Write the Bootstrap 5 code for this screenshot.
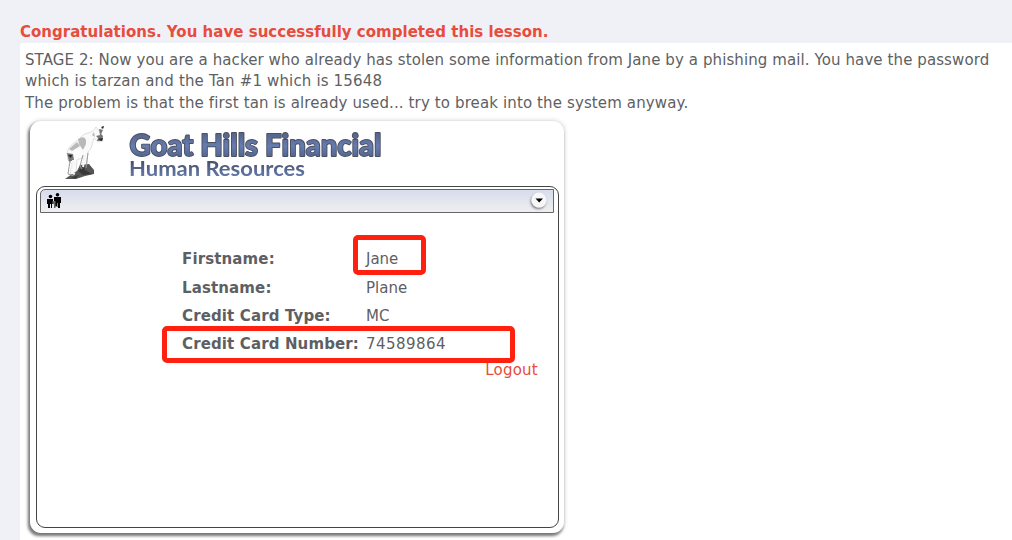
<!DOCTYPE html>
<html lang="en">
<head>
<meta charset="utf-8">
<meta name="viewport" content="width=device-width, initial-scale=1">
<title>Goat Hills Financial</title>
<link rel="stylesheet" href="https://cdn.jsdelivr.net/npm/bootstrap@5.3.0/dist/css/bootstrap.min.css">
<style>
body{background:#f0f1f7;color:#5e5f63;font-family:"DejaVu Sans",sans-serif;font-size:15px;line-height:21.43px;height:540px;overflow:hidden}
.feedback{color:#e74c3c;padding:22px 0 0;height:43px;letter-spacing:.02px}
.lesson{background:#fff;border-top-left-radius:3px;padding:7px 5px 0;height:497px}
.line-a{letter-spacing:.094px}
.line-b{letter-spacing:.155px}
.line-c{letter-spacing:.125px}
.panel{width:534px;height:412px;margin:7px 0 0 5px;border-radius:11px;background:#fff;box-shadow:-1.5px 2.5px 3px 0 #777,0 0 4px 1px #ddd;padding:0 5px 5px 6px}
.masthead{height:65px}
.window{height:342px;border:1px solid #444;border-radius:9px;padding:2px 4px 0 3px}
.toolbar{height:24px;border:1.5px solid #65666a;border-radius:5px 0 0 0;background:linear-gradient(#d7dcec,#efefef);padding:0 4px 0 5px}
.fields{margin:32px 0 0 142px;width:364px}
.field{height:28.4px;line-height:28.4px}
.label-cell{width:184px;letter-spacing:.13px}
.digits{letter-spacing:.46px}
.mark-box{position:absolute;border:5px solid #ff2010;border-radius:5px}
.mark-name{left:171px;top:-10px;width:73px;height:40px}
.mark-card{left:-20px;top:-4px;width:353px;height:37px}
.logout{color:#e74c3c;margin-right:8px;margin-top:1px;letter-spacing:.25px}
</style>
<script src="https://cdn.jsdelivr.net/npm/bootstrap@5.3.0/dist/js/bootstrap.bundle.min.js"></script>
</head>
<body>
<main class="ps-3 ms-1">
<div class="feedback fw-bold">Congratulations. You have successfully completed this lesson.</div>
<section class="lesson">
<div><span class="line-a">STAGE 2: Now you are a hacker who already has stolen some information from Jane by a phishing mail. You have the password</span><br><span class="line-b">which is tarzan and the Tan #1 which is 15648</span><br><span class="line-c">The problem is that the first tan is already used... try to break into the system anyway.</span></div>
<div class="panel">
<header class="masthead">
<svg class="d-block" width="360" height="65" viewBox="36 121 360 65">
<defs>
<linearGradient id="steel" x1="0" y1="0" x2="0" y2="1"><stop offset="0" stop-color="#4b5979"/><stop offset=".55" stop-color="#667cb0"/><stop offset="1" stop-color="#4a5b83"/></linearGradient>
<linearGradient id="slate" x1="0" y1="0" x2="0" y2="1"><stop offset=".2" stop-color="#444d63"/><stop offset="1" stop-color="#6c83bd"/></linearGradient>
<filter id="soft"><feGaussianBlur stdDeviation=".55"/></filter>
<filter id="edge"><feGaussianBlur stdDeviation=".3"/></filter>
</defs>
<g filter="url(#soft)">
<path d="M67 153C68 145 77 142 81 137C85 132 90 134 94 130L96 127L99 131L104 126L101 132L103 141L98 142L94 138C92 143 92 149 88 152L86 171L82 172L84 157L77 160L76 173L70 175L72 164L68 160Z" fill="#fafafa" stroke="#d5d5d5" stroke-width=".8"/>
<path d="M78 139Q87 134 86 144L83 150L79 144ZM69 149L77 142L80 146L72 151ZM92 135L94 132L95 137Z" fill="#b9b9b9"/>
<path d="M67 153L73 154L74 160L69 162ZM99 129L103 130L101 134L103 136L102 141L97 141L98 138L96 136L100 135Z" fill="#777"/>
<path d="M68 155l4 0-1 3zM98 139l5-1-1 3zM101 127l3-1-1 3z" fill="#222"/>
<path d="M77 171L80 165L89 164L94 170L94 174L85 176L76 179L65 179L72 174Z" fill="#555"/>
<path d="M78 171l6-5 1 4 7 4-9 1zM71 177l8-2-4 4z" fill="#383838"/>
<path d="M70 161L68 174L74 176M83 155L80 166L82 169M88 153L86 168" fill="none" stroke="#999" stroke-width="1"/>
<path d="M73 160L72 173L75 174M85 155L83 167" stroke="#f5f5f5" stroke-width="2" fill="none"/>
</g>
<g font-family="Lato,sans-serif" filter="url(#edge)">
<text x="129.5" y="156" font-size="29.5" font-weight="900" textLength="252" lengthAdjust="spacingAndGlyphs" fill="url(#steel)" stroke="#4b4f60" stroke-width="1.9" stroke-linejoin="round" paint-order="stroke">Goat Hills Financial</text>
<text x="129" y="176" font-size="21" font-weight="700" textLength="176" lengthAdjust="spacingAndGlyphs" fill="url(#slate)">Human Resources</text>
</g>
</svg>
</header>
<div class="window">
<div class="toolbar d-flex justify-content-between align-items-center">
<svg width="17" height="17" viewBox="0 1 17 17">
<path d="M9 5h3v10H8V9z" fill="#888"/>
<circle cx="4.5" cy="4.5" r="1.8"/><circle cx="11.5" cy="2.8" r="1.8"/>
<path d="M1 7h6v5H6v4H5v-4H4v4H2v-4H1zM8 5h7v6h-1v5h-2v-5h-1v3H9v-3H8z"/>
<path d="M6.5 9h3v7H8v-4H6.5z" fill="#666"/>
</svg>
<svg class="overflow-visible" width="20" height="20" viewBox="0 0 20 20">
<defs><filter id="drop" x="-30%" y="-30%" width="160%" height="160%"><feDropShadow dx="-.7" dy="1.4" stdDeviation="1" flood-opacity=".55"/></filter></defs>
<circle cx="10" cy="9" r="7.5" fill="#f7f7f7" filter="url(#drop)"/><path d="M6.5 7.5h7.5L10.2 11.5z"/>
</svg>
</div>
<div class="fields position-relative">
<div class="field d-flex position-relative"><span class="label-cell fw-bold">Firstname:</span><span>Jane</span><i class="mark-box mark-name"></i></div>
<div class="field d-flex"><span class="label-cell fw-bold">Lastname:</span><span>Plane</span></div>
<div class="field d-flex"><span class="label-cell fw-bold">Credit Card Type:</span><span>MC</span></div>
<div class="field d-flex position-relative"><span class="label-cell fw-bold">Credit Card Number:</span><span class="digits">74589864</span><i class="mark-box mark-card"></i></div>
<div class="logout text-end">Logout</div>
</div>
</div>
</div>
</section>
</main>
</body>
</html>
